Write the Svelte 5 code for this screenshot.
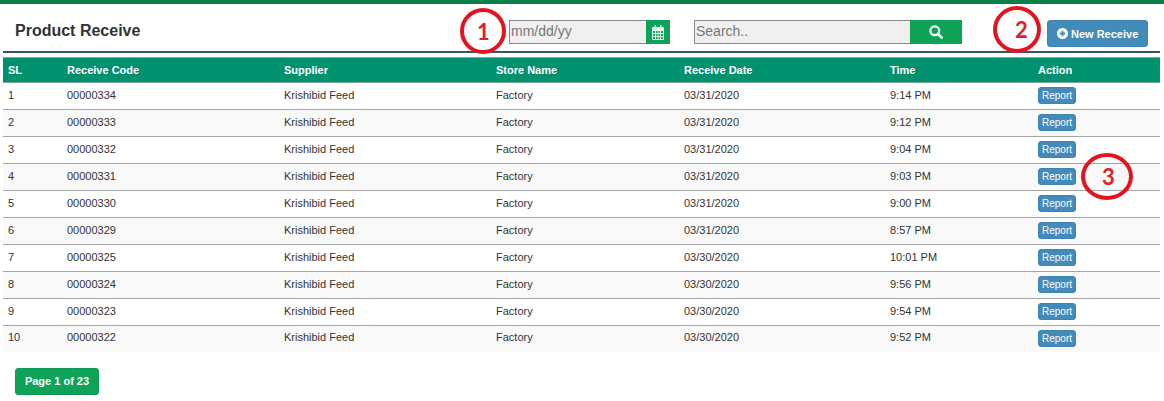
<script lang="ts">
  interface Receive {
    sl: number;
    code: string;
    date: string;
    time: string;
  }

  const rows: Receive[] = [
    { sl: 1, code: "00000334", date: "03/31/2020", time: "9:14 PM" },
    { sl: 2, code: "00000333", date: "03/31/2020", time: "9:12 PM" },
    { sl: 3, code: "00000332", date: "03/31/2020", time: "9:04 PM" },
    { sl: 4, code: "00000331", date: "03/31/2020", time: "9:03 PM" },
    { sl: 5, code: "00000330", date: "03/31/2020", time: "9:00 PM" },
    { sl: 6, code: "00000329", date: "03/31/2020", time: "8:57 PM" },
    { sl: 7, code: "00000325", date: "03/30/2020", time: "10:01 PM" },
    { sl: 8, code: "00000324", date: "03/30/2020", time: "9:56 PM" },
    { sl: 9, code: "00000323", date: "03/30/2020", time: "9:54 PM" },
    { sl: 10, code: "00000322", date: "03/30/2020", time: "9:52 PM" },
  ];

  // hand-drawn red annotations on top of the screenshot
  const marks = [
    { n: 1, x: 460, y: 8, w: 46, h: 46, pad: 1 },
    { n: 2, x: 993, y: 6, w: 48, h: 47, pad: 9 },
    { n: 3, x: 1081, y: 153, w: 52, h: 47, pad: 3 },
  ];
</script>

<main>
  <header>
    <h1>Product Receive</h1>
    <div class="date-box">
      <input type="text" placeholder="mm/dd/yy" aria-label="Date" />
      <button type="button" class="cal" aria-label="Pick date">
        <svg width="12" height="15" viewBox="0 0 12 15">
          <path fill="currentColor" fill-rule="evenodd" d="M1 2h1.5V0h1.6v2h3.8V0h1.6v2H11a1 1 0 0 1 1 1v11a1 1 0 0 1-1 1H1a1 1 0 0 1-1-1V3a1 1 0 0 1 1-1zM1 6v2h2V6zm3 0v2h1.5V6zm2.5 0v2H8V6zM9 6v2h2V6zM1 9v2h2V9zm3 0v2h1.5V9zm2.5 0v2H8V9zM9 9v2h2V9zM1 12v2h2v-2zm3 0v2h1.5v-2zm2.5 0v2H8v-2zM9 12v2h2v-2z"/>
        </svg>
      </button>
    </div>
    <div class="search-box">
      <input type="text" placeholder="Search.." aria-label="Search" />
      <button type="button" class="find" aria-label="Search">
        <svg width="14" height="14" viewBox="0 0 14 14">
          <circle cx="5.8" cy="5.8" r="4.4" fill="none" stroke="currentColor" stroke-width="2.2"/>
          <path d="M9 9l3.6 3.6" stroke="currentColor" stroke-width="2.6" stroke-linecap="round"/>
        </svg>
      </button>
    </div>
    <button type="button" class="new-btn">
      <svg width="11" height="11" viewBox="0 0 12 12">
        <path fill="currentColor" fill-rule="evenodd" d="M6 0a6 6 0 1 1 0 12A6 6 0 0 1 6 0zM5 3v2H3v2h2v2h2V7h2V5H7V3z"/>
      </svg>
      New Receive
    </button>
  </header>

  <table>
    <colgroup>
      <col style="width: 59px" />
      <col style="width: 217px" />
      <col style="width: 212px" />
      <col style="width: 188px" />
      <col style="width: 206px" />
      <col style="width: 148px" />
      <col />
    </colgroup>
    <thead>
      <tr>
        <th>SL</th>
        <th>Receive Code</th>
        <th>Supplier</th>
        <th>Store Name</th>
        <th>Receive Date</th>
        <th>Time</th>
        <th>Action</th>
      </tr>
    </thead>
    <tbody>
      {#each rows as row (row.sl)}
        <tr>
          <td>{row.sl}</td>
          <td>{row.code}</td>
          <td>Krishibid Feed</td>
          <td>Factory</td>
          <td>{row.date}</td>
          <td>{row.time}</td>
          <td><button type="button" class="report">Report</button></td>
        </tr>
      {/each}
    </tbody>
  </table>

  <button type="button" class="pager">Page 1 of 23</button>

  {#each marks as m (m.n)}
    <div
      class="mark"
      style="left: {m.x}px; top: {m.y}px; width: {m.w}px; height: {m.h}px; padding-left: {m.pad}px"
    >
      {m.n}
    </div>
  {/each}
</main>

<style>
  :global(body) {
    margin: 0;
    background: #fff;
    font-family: "Liberation Sans", Arial, sans-serif;
    color: #333;
  }

  :global(*) {
    box-sizing: border-box;
  }

  main {
    position: relative;
    width: 1164px;
    height: 401px;
    overflow: hidden;
    border-top: 4px solid #0a8048;
    padding: 0 4px 0 3px;
  }

  header {
    display: flex;
    align-items: flex-start;
    height: 49px;
    padding-top: 16px;
    border-bottom: 2px solid #3f5261;
  }

  h1 {
    margin: 2px 0 0 12px;
    width: 494px;
    font-size: 16px;
    font-weight: 700;
    color: #333;
  }

  .date-box,
  .search-box {
    display: flex;
    height: 24px;
  }

  .date-box {
    width: 161px;
    margin-right: 24px;
  }

  .search-box {
    width: 268px;
    margin-right: 85px;
  }

  input {
    flex: 1;
    min-width: 0;
    height: 24px;
    padding: 0 1px 2px;
    background: #f0f0f0;
    border: 1px solid #8a8a8a;
    border-right: 0;
    font-family: inherit;
    font-size: 14px;
    color: #555;
  }

  input::placeholder {
    color: #777;
    opacity: 1;
  }

  .cal,
  .find {
    display: flex;
    align-items: center;
    justify-content: center;
    padding: 0;
    height: 24px;
    background: #0fa35a;
    border: 0;
    color: #fff;
  }

  .cal {
    width: 24px;
    color: #dff5e9;
  }

  .find {
    width: 52px;
  }

  .new-btn {
    display: flex;
    align-items: center;
    gap: 3px;
    width: 101px;
    height: 27px;
    padding: 0 0 0 9px;
    background: #428bba;
    border: 1px solid #3f83af;
    border-radius: 3px;
    color: #fff;
    font-family: inherit;
    font-size: 11px;
    font-weight: 700;
    white-space: nowrap;
  }

  table {
    width: 1157px;
    margin-top: 4px;
    table-layout: fixed;
    border-collapse: collapse;
    font-size: 11px;
  }

  th {
    height: 25px;
    padding: 0 5px;
    background: #00916e;
    border-top: 1px solid #7fa79a;
    border-bottom: 1px solid #7fa79a;
    color: #fff;
    font-weight: 700;
    text-align: left;
  }

  td {
    height: 27px;
    padding: 0 5px 3px;
    border-bottom: 1px solid #a6a6a6;
    color: #333;
  }

  td:last-child {
    padding-bottom: 1px;
  }

  tbody tr:nth-child(even) td {
    background: #f9f9f9;
  }

  tbody tr:last-child td {
    height: 26px;
    border-bottom: 0;
  }

  .report {
    display: block;
    width: 38px;
    height: 17px;
    padding: 0;
    background: #428bba;
    border: 1px solid #3f83af;
    border-radius: 3px;
    color: #fff;
    font-family: inherit;
    font-size: 10px;
  }

  .pager {
    display: block;
    width: 84px;
    height: 27px;
    margin: 16px 0 0 12px;
    padding: 0;
    background: #0fa35a;
    border: 1px solid #0d9a54;
    border-radius: 3px;
    color: #fff;
    font-family: inherit;
    font-size: 11px;
    font-weight: 700;
  }

  .mark {
    position: absolute;
    display: flex;
    align-items: center;
    justify-content: center;
    margin-top: -4px;
    border: 4px solid #e3141f;
    border-radius: 50%;
    color: #d8232a;
    font-family: Lato, sans-serif;
    font-size: 22px;
    font-weight: 700;
  }
</style>
